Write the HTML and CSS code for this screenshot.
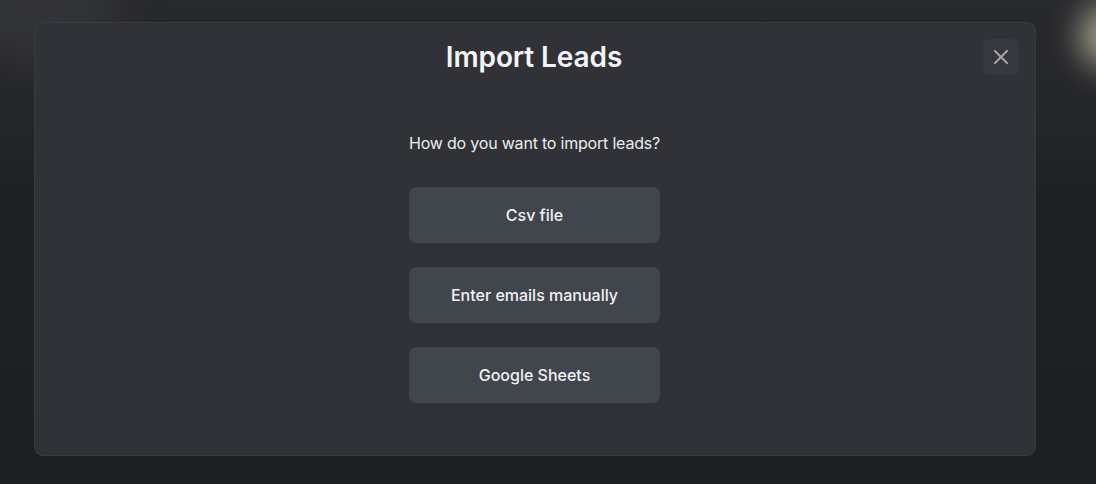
FILE: index.html
```html
<!DOCTYPE html>
<html lang="en">
<head>
    <meta charset="UTF-8">
    <meta name="viewport" content="width=device-width, initial-scale=1.0">
    <title>Import Leads</title>
    <link rel="stylesheet" href="styles.css">
</head>
<body>
    <div class="backdrop">
        <div class="glow glow-left"></div>
        <div class="glow glow-right"></div>
        <div class="modal">
            <div class="modal-header">
                <h2>Import Leads</h2>
                <button class="close-button" aria-label="Close">
                    <svg width="18" height="18" viewBox="0 0 18 18" fill="none">
                        <path d="M3 3L15 15M15 3L3 15" stroke="#a3a4a8" stroke-width="2" stroke-linecap="square"/>
                    </svg>
                </button>
            </div>
            <div class="modal-body">
                <p class="question">How do you want to import leads?</p>
                <div class="options">
                    <button class="option">Csv file</button>
                    <button class="option">Enter emails manually</button>
                    <button class="option">Google Sheets</button>
                </div>
            </div>
        </div>
    </div>
</body>
</html>
```

FILE: styles.css
```css
body {
    margin: 0;
    font-family: Inter, "Noto Sans", Arial, sans-serif;
    background-color: #1f2023;
    color: #f2f2f3;
}
.backdrop {
    position: relative;
    height: 484px;
    padding: 22px 60px 0 34px;
    box-sizing: border-box;
    overflow: hidden;
    background:
        linear-gradient(180deg, #28292d 0px, #25262a 120px, #1f2023 200px, #1e1f21 484px);
}
.glow {
    position: absolute;
    border-radius: 50%;
}
.glow-left {
    left: -50px;
    top: -40px;
    width: 170px;
    height: 100px;
    background: rgba(62, 64, 70, 0.5);
    filter: blur(22px);
}
.glow-right {
    left: 1080px;
    top: 4px;
    width: 60px;
    height: 64px;
    background: rgba(196, 191, 162, 0.8);
    filter: blur(16px);
}
.modal {
    position: relative;
    width: 1002px;
    height: 434px;
    box-sizing: border-box;
    padding: 16px;
    background-color: #313237;
    border: 1px solid #3a3b40;
    border-radius: 9px;
}
.modal-header {
    position: relative;
    display: flex;
    justify-content: center;
    height: 36px;
    padding-right: 2px;
}
.modal-header h2 {
    margin: 0;
    font-size: 28px;
    line-height: 36px;
    font-weight: 600;
    letter-spacing: -0.1px;
    color: #f4f4f5;
}
.close-button {
    position: absolute;
    right: 0;
    top: 0;
    width: 36px;
    height: 36px;
    padding: 0;
    display: flex;
    align-items: center;
    justify-content: center;
    border: none;
    border-radius: 6px;
    background-color: #37383d;
    cursor: pointer;
}
.modal-body {
    display: flex;
    flex-direction: column;
    align-items: center;
    padding-top: 56px;
    padding-right: 1px;
}
.question {
    margin: 0 0 32px;
    font-size: 16px;
    line-height: 24px;
    letter-spacing: -0.2px;
    color: #ececee;
}
.options {
    display: flex;
    flex-direction: column;
    gap: 24px;
    width: 251px;
}
.option {
    height: 56px;
    border: none;
    border-radius: 7px;
    background-color: #41454c;
    color: #f2f2f3;
    font-family: inherit;
    font-size: 16px;
    font-weight: 500;
    cursor: pointer;
}
.option:hover {
    background-color: #4a4e56;
}
```
